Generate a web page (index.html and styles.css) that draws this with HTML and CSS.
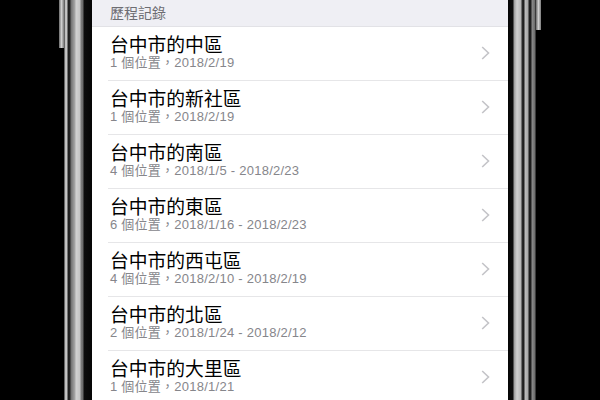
FILE: index.html
```html
<!DOCTYPE html>
<html lang="zh-Hant">
<head>
    <meta charset="utf-8">
    <meta name="viewport" content="width=device-width, initial-scale=1.0">
    <title>歷程記錄</title>
    <link rel="stylesheet" href="styles.css">
</head>
<body>
    <div class="phone">
        <div class="side-btn left"><div class="btn-top"></div></div>
        <div class="bezel bezel-left"></div>

        <div class="screen">
            <div class="section-head">歷程記錄</div>

            <ul class="history">
                <li class="row">
                    <div class="info">
                        <div class="title">台中市的中區</div>
                        <div class="sub">1 個位置，2018/2/19</div>
                    </div>
                    <svg class="chev" width="9" height="14" viewBox="0 0 9 14"><path d="M1.2 1 L7.5 7 L1.2 13" fill="none" stroke="#c4c4c8" stroke-width="1.6"/></svg>
                </li>
                <li class="row">
                    <div class="info">
                        <div class="title">台中市的新社區</div>
                        <div class="sub">1 個位置，2018/2/19</div>
                    </div>
                    <svg class="chev" width="9" height="14" viewBox="0 0 9 14"><path d="M1.2 1 L7.5 7 L1.2 13" fill="none" stroke="#c4c4c8" stroke-width="1.6"/></svg>
                </li>
                <li class="row">
                    <div class="info">
                        <div class="title">台中市的南區</div>
                        <div class="sub">4 個位置，2018/1/5 - 2018/2/23</div>
                    </div>
                    <svg class="chev" width="9" height="14" viewBox="0 0 9 14"><path d="M1.2 1 L7.5 7 L1.2 13" fill="none" stroke="#c4c4c8" stroke-width="1.6"/></svg>
                </li>
                <li class="row">
                    <div class="info">
                        <div class="title">台中市的東區</div>
                        <div class="sub">6 個位置，2018/1/16 - 2018/2/23</div>
                    </div>
                    <svg class="chev" width="9" height="14" viewBox="0 0 9 14"><path d="M1.2 1 L7.5 7 L1.2 13" fill="none" stroke="#c4c4c8" stroke-width="1.6"/></svg>
                </li>
                <li class="row">
                    <div class="info">
                        <div class="title">台中市的西屯區</div>
                        <div class="sub">4 個位置，2018/2/10 - 2018/2/19</div>
                    </div>
                    <svg class="chev" width="9" height="14" viewBox="0 0 9 14"><path d="M1.2 1 L7.5 7 L1.2 13" fill="none" stroke="#c4c4c8" stroke-width="1.6"/></svg>
                </li>
                <li class="row">
                    <div class="info">
                        <div class="title">台中市的北區</div>
                        <div class="sub">2 個位置，2018/1/24 - 2018/2/12</div>
                    </div>
                    <svg class="chev" width="9" height="14" viewBox="0 0 9 14"><path d="M1.2 1 L7.5 7 L1.2 13" fill="none" stroke="#c4c4c8" stroke-width="1.6"/></svg>
                </li>
                <li class="row">
                    <div class="info">
                        <div class="title">台中市的大里區</div>
                        <div class="sub">1 個位置，2018/1/21</div>
                    </div>
                    <svg class="chev" width="9" height="14" viewBox="0 0 9 14"><path d="M1.2 1 L7.5 7 L1.2 13" fill="none" stroke="#c4c4c8" stroke-width="1.6"/></svg>
                </li>
            </ul>
        </div>

        <div class="bezel bezel-right"></div>
        <div class="side-btn right"><div class="btn-top"></div></div>
    </div>
</body>
</html>
```

FILE: styles.css
```css
html, body {
    margin: 0;
    padding: 0;
    background-color: #000;
    height: 400px;
    overflow: hidden;
}

body {
    font-family: "Liberation Sans", "Noto Sans CJK TC", sans-serif;
}

.phone {
    display: flex;
    height: 400px;
    padding-left: 59px;
}

.side-btn {
    width: 5px;
}
.side-btn .btn-top {
    background: linear-gradient(to right, #6a6a6a, #cfcfcf 50%, #7a7a7a);
}
.side-btn.left .btn-top {
    height: 48px;
}
.side-btn.right .btn-top {
    height: 30px;
}

.bezel {
    width: 28px;
}
.bezel-left {
    background: linear-gradient(to right,
        #111 0px, #b9b9b9 1px, #c9c9c9 3px, #1c1c1c 4px, #262626 6px,
        #707070 7px, #a8a8a8 11px, #d2d2d2 12px, #c4c4c4 16px,
        #7d7d7d 17px, #6a6a6a 19px, #0c0c0c 20px, #050505 28px);
}
.bezel-right {
    background: linear-gradient(to right,
        #050505 0px, #0c0c0c 5px, #9a9a9a 6px, #cfcfcf 9px, #b5b5b5 13px,
        #2a2a2a 14px, #1c1c1c 16px, #bdbdbd 17px, #a6a6a6 20px,
        #1e1e1e 21px, #1c1c1c 23px, #8c8c8c 24px, #6a6a6a 27px, #0a0a0a 28px);
}

.screen {
    width: 416px;
    background-color: #fff;
    overflow: hidden;
}

.section-head {
    height: 26px;
    line-height: 27px;
    padding-left: 18px;
    background-color: #efeff4;
    border-bottom: 1px solid #e2e2e6;
    color: #6d6d72;
    font-size: 14px;
}

.history {
    list-style: none;
    margin: 0;
    padding: 0 0 0 16px;
}

.row {
    display: flex;
    align-items: center;
    padding: 9px 18px 10px 2px;
    border-bottom: 1px solid #e6e6e8;
}

.info {
    flex: 1;
}

.title {
    font-size: 18.8px;
    line-height: 20px;
    color: #000;
}

.sub {
    font-size: 13px;
    line-height: 14px;
    letter-spacing: 0.25px;
    color: #86868b;
}

.chev {
    display: block;
    margin-top: -1px;
}
```
